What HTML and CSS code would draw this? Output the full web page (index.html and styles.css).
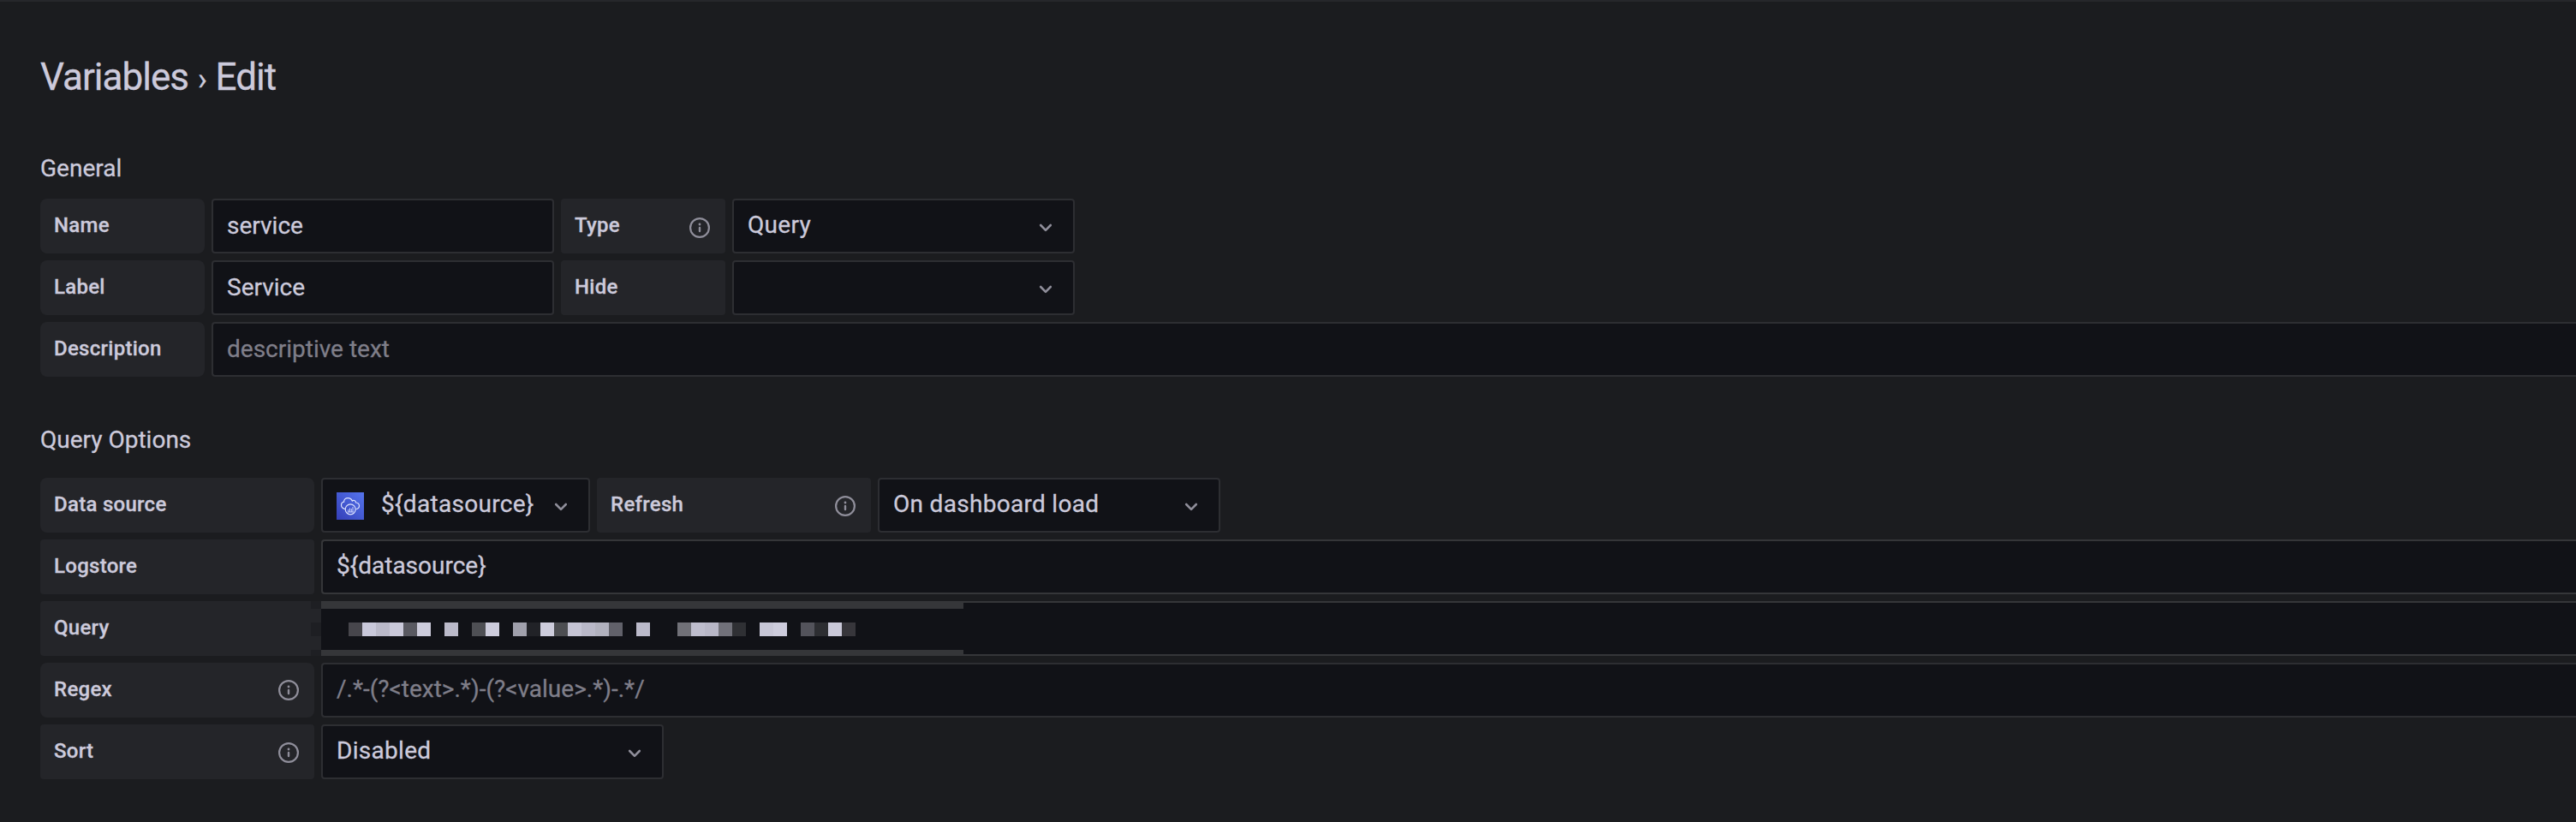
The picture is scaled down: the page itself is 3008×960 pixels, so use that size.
FILE: index.html
```html
<!DOCTYPE html>
<html lang="en">
<head>
<meta charset="utf-8">
<title>Variables › Edit</title>
<link rel="stylesheet" href="styles.css">
</head>
<body>
<svg class="defs" aria-hidden="true">
  <symbol id="info" viewBox="0 0 24 24"><circle cx="12" cy="12" r="10.900" fill="none" stroke="currentColor" stroke-width="2.200"/><circle cx="12" cy="8" r="1.400" fill="currentColor"/><path d="M12 12v4" stroke="currentColor" stroke-width="2.400" stroke-linecap="round"/></symbol>
  <symbol id="chevron" viewBox="0 0 16 10"><path d="M2.200 2l5.800 5.800 5.800-5.800" fill="none" stroke="currentColor" stroke-width="2.600" stroke-linecap="round" stroke-linejoin="round"/></symbol>
</svg>
<main class="page">
  <h1 class="title">Variables <span class="sep">›</span> Edit</h1>

  <section class="section general">
    <h2 class="heading">General</h2>
    <div class="row">
      <div class="label round">Name</div><div class="field">service</div>
      <div class="label">Type<svg class="info"><use href="#info"/></svg></div>
      <div class="field select">Query<svg class="chevron"><use href="#chevron"/></svg></div>
    </div>
    <div class="row">
      <div class="label round">Label</div><div class="field">Service</div>
      <div class="label">Hide</div>
      <div class="field select"><svg class="chevron"><use href="#chevron"/></svg></div>
    </div>
    <div class="row">
      <div class="label round">Description</div><div class="field wide placeholder">descriptive text</div>
    </div>
  </section>

  <section class="section query">
    <h2 class="heading">Query Options</h2>
    <div class="row">
      <div class="label round">Data source</div>
      <div class="field select source">
        <svg class="logo" viewBox="0 0 32 32">
          <defs><linearGradient id="blue" x1="0" y1="1" x2="1" y2="0"><stop offset="0" stop-color="#343fb8"/><stop offset="1" stop-color="#5574ec"/></linearGradient></defs>
          <rect width="32" height="32" fill="url(#blue)"/>
          <path d="M10.200 19.500C7.500 19 5.500 17.500 5.500 15C5.500 13 6.700 11.500 8.600 11.200C8.400 8.500 10.500 6.600 13.200 6.600C16 6.600 17.500 8 18.300 10C19.600 8.700 22.300 9.300 22.600 12C25 12.300 26.500 13.600 26.500 15.700C26.500 18 25 19.300 22.600 19.500" fill="none" stroke="#dfe4ff" stroke-width="1.200"/>
          <circle cx="16.200" cy="19.800" r="6" fill="none" stroke="#dfe4ff" stroke-width="1.200"/>
          <path d="M13.700 20v3M15.500 18.500v4.500M17.300 19v4M19 17v6M12.800 23h7" stroke="#c9d2ff" stroke-width="1"/>
        </svg>
        ${datasource}<svg class="chevron"><use href="#chevron"/></svg>
      </div>
      <div class="label">Refresh<svg class="info"><use href="#info"/></svg></div>
      <div class="field select">On dashboard load<svg class="chevron"><use href="#chevron"/></svg></div>
    </div>
    <div class="row">
      <div class="label">Logstore</div><div class="field wide bright">${datasource}</div>
    </div>
    <div class="row">
      <div class="label">Query</div><div class="field wide bright"></div>
      <svg class="mosaic" viewBox="0 0 762 64" shape-rendering="crispEdges">
        <path fill="#111217" d="M12 0h750v64H12z"/>
        <path fill="#242529" d="M0 0h12v64H0z"/>
        <path fill="#1e1f23" d="M0 0h12v9H0zM0 25h12v16H0zM0 57h12v7H0z"/>
        <path fill="#353639" d="M12 0h750v9H12zM12 57h750v7H12z"/>
        <g transform="translate(44 25)">
          <path fill="#47464c" d="M0 0h16v16H0z"/><path fill="#c9c8da" d="M16 0h16v16H16z"/><path fill="#bab9c9" d="M32 0h16v16H32z"/><path fill="#cac9da" d="M48 0h16v16H48z"/><path fill="#595961" d="M64 0h16v16H64z"/><path fill="#cdccdc" d="M80 0h16v16H80z"/>
          <path fill="#bbbaca" d="M112 0h16v16h-16z"/>
          <path fill="#4e4f54" d="M144 0h16v16h-16z"/><path fill="#cdccdc" d="M160 0h16v16h-16z"/>
          <path fill="#a0a0ac" d="M192 0h16v16h-16z"/><path fill="#212227" d="M208 0h16v16h-16z"/><path fill="#cdccdc" d="M224 0h16v16h-16z"/><path fill="#4d4e52" d="M240 0h16v16h-16z"/><path fill="#c5c4d4" d="M256 0h16v16h-16z"/><path fill="#b9b8c8" d="M272 0h16v16h-16z"/><path fill="#b1b1be" d="M288 0h16v16h-16z"/><path fill="#61616a" d="M304 0h16v16h-16z"/>
          <path fill="#bbbaca" d="M336 0h16v16h-16z"/>
          <path fill="#717178" d="M384 0h16v16h-16z"/><path fill="#bebdcd" d="M400 0h16v16h-16z"/><path fill="#b8b7c7" d="M416 0h16v16h-16z"/><path fill="#71717a" d="M432 0h16v16h-16z"/><path fill="#2f3034" d="M448 0h16v16h-16z"/>
          <path fill="#c7c6d6" d="M480 0h16v16h-16z"/><path fill="#cdccdc" d="M496 0h16v16h-16z"/>
          <path fill="#53535b" d="M528 0h16v16h-16z"/><path fill="#2d2e32" d="M544 0h16v16h-16z"/><path fill="#cac9d9" d="M560 0h16v16h-16z"/><path fill="#37363b" d="M576 0h16v16h-16z"/>
        </g>
      </svg>
    </div>
    <div class="row">
      <div class="label round">Regex<svg class="info centered"><use href="#info"/></svg></div><div class="field wide placeholder">/.*-(?&lt;text&gt;.*)-(?&lt;value&gt;.*)-.*/</div>
    </div>
    <div class="row">
      <div class="label">Sort<svg class="info"><use href="#info"/></svg></div>
      <div class="field select">Disabled<svg class="chevron"><use href="#chevron"/></svg></div>
    </div>
  </section>
</main>
</body>
</html>
```
FILE: styles.css
```css
* { box-sizing: border-box; }
html { height: 960px; overflow: hidden; }
body {
  margin: 0;
  background: #1b1c1f;
  color: #cccadb;
  font: 400 28px/32px Roboto, sans-serif;
  -webkit-text-stroke: 0.3px currentColor;
  overflow: hidden;
}
.defs { display: none; }
.page {
  height: 960px;
  padding: 62px 0 0 47px;
  border-top: 2px solid #26272b;
  overflow: hidden;
}
.title {
  margin: 0;
  font-size: 44px;
  line-height: 52px;
  font-weight: 400;
  letter-spacing: -1px;
}
.sep { font-size: 36px; line-height: 1; margin: 0 1px; }
.section { display: flex; flex-direction: column; gap: 8px; }
.general { margin-top: 65px; }
.query { margin-top: 58px; }
.heading {
  margin: 0 0 11px;
  font-size: 28px;
  line-height: 32px;
  font-weight: 400;
}
.query .heading { margin-bottom: 20px; }
.row { display: flex; gap: 8px; height: 64px; position: relative; }
.label {
  flex: none;
  display: flex;
  align-items: center;
  justify-content: space-between;
  width: 192px;
  padding: 0 18px 2px 16px;
  border-radius: 4px;
  background: #242529;
  font-size: 24px;
  font-weight: 500;
  letter-spacing: 0.28px;
}
.query .label { width: 320px; }
.label.round { border-radius: 8px; }
.field {
  flex: none;
  display: flex;
  align-items: center;
  width: 400px;
  padding: 0 16px;
  border: 2px solid #2d2e32;
  border-radius: 4px;
  background: #111217;
}
.field.select, .query .field { padding-bottom: 2px; }
.select { letter-spacing: 0.3px; }
.field.wide { flex: 1; border-right: 0; border-radius: 4px 0 0 4px; }
.bright { border-color: #353639; }
.placeholder { color: #7f7e89; }
.field.source { width: 314px; }
.info { width: 24px; height: 24px; margin-top: 6px; color: #8f8e9a; }
.query .info { margin-top: 4px; }
.query .info.centered { margin-top: 2px; }
.chevron { width: 16px; height: 10px; margin: 6px 8px 0 auto; color: #8f8e9a; }
.logo { width: 32px; height: 32px; margin: 4px 20px 0 0; }
.mosaic { position: absolute; left: 316px; top: 0; width: 762px; height: 64px; }
```
